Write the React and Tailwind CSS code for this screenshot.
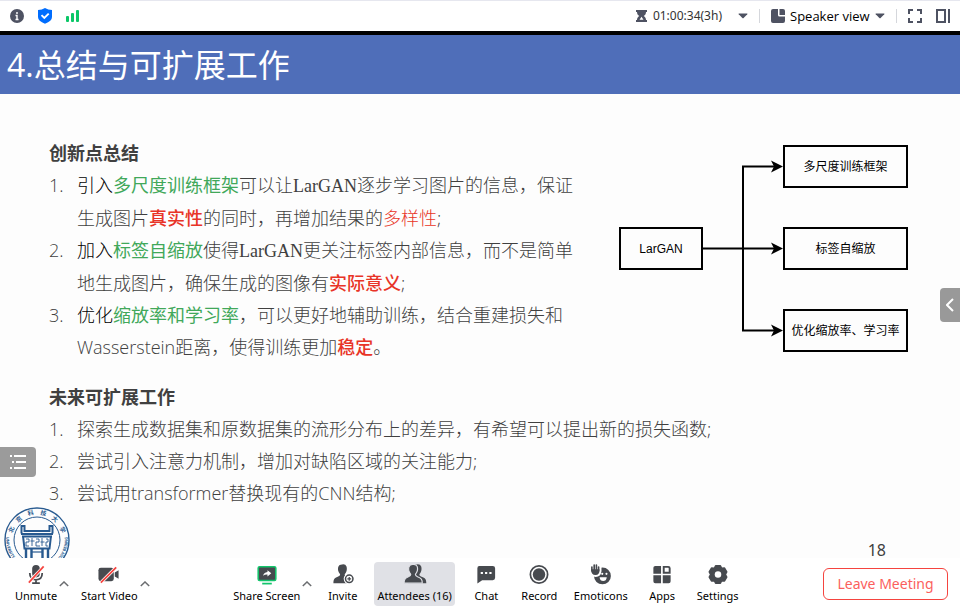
const DARK = "#474a4f";
const SLATE = "#4e5262";

const Green = ({ children }) => <span className="font-normal text-[#41a85a]">{children}</span>;
const Red = ({ children, bold }) => (
  <span className={bold ? "font-medium text-[#e83427]" : "font-light text-[#e83427]"}>{children}</span>
);
const Lead = ({ children }) => <span className="text-black">{children}</span>;
const Serif = ({ children }) => (
  <span className="font-['Liberation_Serif','Noto_Sans_CJK_SC',serif]">{children}</span>
);

function Numbered({ items }) {
  return (
    <ol className="flex flex-col">
      {items.map((item, i) => (
        <li key={i} className="flex">
          <span className="w-7 shrink-0">{i + 1}.</span>
          <span>{item}</span>
        </li>
      ))}
    </ol>
  );
}

const innovations = [
  <>
    <Lead>引入</Lead>
    <Green>多尺度训练框架</Green>可以让<Serif>LarGAN</Serif>逐步学习图片的信息，保证
    <br />
    生成图片<Red bold>真实性</Red>的同时，再增加结果的<Red>多样性</Red>;
  </>,
  <>
    <Lead>加入</Lead>
    <Green>标签自缩放</Green>使得<Serif>LarGAN</Serif>更关注标签内部信息，而不是简单
    <br />
    地生成图片，确保生成的图像有<Red bold>实际意义</Red>;
  </>,
  <>
    <Lead>优化</Lead>
    <Green>缩放率和学习率</Green>，可以更好地辅助训练，结合重建损失和
    <br />
    Wasserstein距离，使得训练更加<Red bold>稳定</Red>。
  </>,
];

const future = [
  "探索生成数据集和原数据集的流形分布上的差异，有希望可以提出新的损失函数;",
  "尝试引入注意力机制，增加对缺陷区域的关注能力;",
  "尝试用transformer替换现有的CNN结构;",
];

function Node({ children, width }) {
  return (
    <div
      className={`flex h-[43px] items-center justify-center border-2 border-black text-xs font-normal whitespace-nowrap text-black ${width}`}
    >
      {children}
    </div>
  );
}

function Diagram() {
  return (
    <div className="mt-2 flex shrink-0 items-center self-start font-['Liberation_Sans','Noto_Sans_CJK_SC',sans-serif]">
      <Node width="w-[84px]">LarGAN</Node>
      <svg width="80" height="207" viewBox="0 0 80 207" aria-hidden="true">
        <path d="M0 103.5H72M72 21.500H40V185.500H72" fill="none" stroke="#000" strokeWidth="2" />
        {[21.5, 103.5, 185.5].map((y) => (
          <path key={y} d="M0 0l-12-6 3 6-3 6z" transform={`translate(80 ${y})`} />
        ))}
      </svg>
      <div className="flex flex-col gap-[39px]">
        <Node width="w-[125px]">多尺度训练框架</Node>
        <Node width="w-[125px]">标签自缩放</Node>
        <Node width="w-[125px]">优化缩放率、学习率</Node>
      </div>
    </div>
  );
}

function Emblem() {
  return (
    <svg width="66" height="66" viewBox="0 0 66 66" fill="none" stroke="#285a90" role="img" aria-label="北京科技大学">
      <defs>
        <path id="arc-top" d="M7.500 33a25.500 25.500 0 0 1 51 0" />
        <path id="arc-bottom" d="M7 16A31 31 0 0 0 33 63.500 A31 31 0 0 0 59 16" />
      </defs>
      <circle cx="33" cy="33" r="32" strokeWidth="1.400" fill="#fdfdfd" />
      <circle cx="33" cy="33" r="23" strokeWidth="1" />
      <g fill="#285a90" stroke="none">
        <text fontSize="6" fontWeight="bold" fontFamily="Noto Sans CJK SC, sans-serif">
          <textPath href="#arc-top" startOffset="50%" textAnchor="middle">
            北　京　科　技　大　学
          </textPath>
        </text>
        <text fontSize="4" fontWeight="bold" fontFamily="Open Sans, sans-serif">
          <textPath href="#arc-bottom" startOffset="50%" textAnchor="middle">
            UNIVERSITY OF SCIENCE AND TECHNOLOGY BEIJING
          </textPath>
        </text>
      </g>
      <path
        d="M16.500 19h4v5h25v-5h4M17.500 18.500v8M48.500 18.500v8M17 27h32M18 29.500h30M19 29l1.500 12.500h25l1.500-12.500"
        strokeWidth="2"
      />
      <path d="M22 32h3v3h-3v4h3M28 31v8M26.500 34h4M32 32h3v3h-3v4h4M38 31v8M36.500 35h4M42 32h2v3h-2v4h2" strokeWidth="0.900" />
      <path d="M22 42v18M27.500 42v18M38.500 42v18M44 42v18" strokeWidth="2.400" />
      <path d="M28 45h10" strokeWidth="1.200" />
    </svg>
  );
}

const Caret = () => (
  <svg width="10" height="6" viewBox="0 0 10 6" aria-hidden="true">
    <path d="M1 .5h8q.8 0 .3.700L5.600 5q-.6.600-1.200 0L.7 1.200Q.2.500 1 .5z" fill={SLATE} />
  </svg>
);

function TopBar() {
  return (
    <header className="flex h-[31px] items-center border-t border-[#e6e7ef] bg-white pr-[10px] pl-[10px] text-[13px] font-['Open_Sans',sans-serif]">
      <button aria-label="Meeting information">
        <svg width="14" height="14" viewBox="0 0 14 14">
          <circle cx="7" cy="7" r="7" fill={SLATE} />
          <path d="M7 3v2M5.500 6.500H7v4M5.500 10.500h3" stroke="#fff" strokeWidth="1.400" fill="none" />
        </svg>
      </button>
      <button aria-label="Security" className="ml-[14px]">
        <svg width="14" height="16" viewBox="0 0 14 16">
          <path d="M7 0q3 2 7 2v7q0 4-7 6.800Q0 13 0 9V2q4 0 7-2z" fill="#006dfe" />
          <path d="M3.500 7.200L6.300 10l4.400-4.400" stroke="#fff" strokeWidth="1.900" fill="none" />
        </svg>
      </button>
      <button aria-label="Network" className="ml-[14px]">
        <svg width="14" height="14" viewBox="0 0 14 14" fill="#0bc768">
          <rect x="0" y="7" width="3" height="6" rx="1" />
          <rect x="5" y="4" width="3" height="9" rx="1" />
          <rect x="10" y="1" width="3" height="12" rx="1" />
        </svg>
      </button>
      <button className="ml-auto flex items-center text-xs text-[#333] font-['Noto_Sans',sans-serif]">
        <svg width="11" height="12" viewBox="0 0 11 12" className="mr-[6px]">
          <path d="M0 0h11v2H10c0 2-.8 3-2.300 4 1.500 1 2.300 2 2.300 4h1v2H0v-2h1c0-2 .8-3 2.300-4C1.800 5 1 4 1 2H0z" fill={SLATE} />
          <path d="M5.500 6.800L3.500 9.800h4z" fill="#fff" />
        </svg>
        <span className="mr-4">01:00:34(3h)</span>
        <Caret />
      </button>
      <span className="mx-[11px] h-[14px] w-px bg-[#d5d7dc]" />
      <svg width="14" height="14" viewBox="0 0 14 14" fill={SLATE} aria-hidden="true">
        <path d="M2 0h5v6q0 1.500 1.500 1.500H14V12q0 2-2 2H2q-2 0-2-2V2q0-2 2-2z" />
        <path d="M8.500 0H12q2 0 2 2v4H8.500z" />
      </svg>
      <label className="ml-[5px] flex items-center">
        <span className="sr-only">Layout</span>
        <select defaultValue="speaker" className="mr-[5px] h-6 appearance-none bg-transparent leading-6 text-black">
          <option value="speaker">Speaker view</option>
        </select>
        <Caret />
      </label>
      <span className="mx-[11px] h-[14px] w-px bg-[#d5d7dc]" />
      <button aria-label="Full screen">
        <svg width="14" height="14" viewBox="0 0 14 14" fill="none" stroke={SLATE} strokeWidth="2">
          <path d="M1 5V1h4M9 1h4v4M13 9v4H9M5 13H1V9" />
        </svg>
      </button>
      <button aria-label="Side panel" className="ml-[14px]">
        <svg width="14" height="14" viewBox="0 0 14 14" fill="none" stroke={SLATE} strokeWidth="2">
          <path d="M1 1h8v12H1zM13 0v14" />
        </svg>
      </button>
    </header>
  );
}

function Tool({ label, active, children }) {
  return (
    <button
      className={`flex h-11 min-w-[43px] flex-col items-center rounded px-[3px] pt-px whitespace-nowrap ${active ? "bg-[#e0e1e6]" : ""}`}
    >
      <svg width="24" height="24" viewBox="0 0 24 24" aria-hidden="true">
        {children}
      </svg>
      <span className="leading-5">{label}</span>
    </button>
  );
}

const More = ({ label }) => (
  <button aria-label={label} className="flex w-2 justify-center">
    <svg width="10" height="6" viewBox="0 0 10 6" fill="none" stroke="#6b6d70" strokeWidth="1.500" className="shrink-0">
      <path d="M.8 5L5 1l4.200 4" />
    </svg>
  </button>
);

const person =
  "M9 1.500Q12.500.8 13.800 3.800c.7 3-.2 6-2 8 0 1.500.7 2 2.200 2.600 4 1.500 5 2.600 5 6.600H0c0-4 1-5.100 4.500-6.600 1.500-.6 2.500-1.100 2.500-2.600C5 9.500 4.300 7 5 4.300 5.700 2.200 7 1.500 9 1.500z";

function Toolbar() {
  return (
    <footer className="flex h-[52px] items-center justify-between bg-white pr-3 pb-px pl-3 text-[11px] text-black font-['Noto_Sans',sans-serif]">
      <div className="flex items-center gap-[10px]">
        <div className="flex items-center">
          <Tool label="Unmute">
            <rect x="8" y="2" width="8" height="13" rx="4" fill={DARK} />
            <path d="M5.500 10.500q0 7 6.500 7t6.500-7M12 17v3.500M8 21h8" fill="none" stroke={DARK} strokeWidth="1.800" />
            <path d="M4.500 20L20 4" stroke="#fff" strokeWidth="3.500" />
            <path d="M4.500 20.500L20 3.500" stroke="#f5443f" strokeWidth="1.800" />
          </Tool>
          <More label="Audio options" />
        </div>
        <div className="flex items-center">
          <Tool label="Start Video">
            <rect x="1" y="5" width="16" height="14" rx="2.500" fill={DARK} />
            <path d="M18 10l4-2.500v9L18 14z" fill={DARK} />
            <path d="M3.500 20.500L19.500 4.500" stroke="#fff" strokeWidth="3.500" />
            <path d="M3.500 20.500L19.500 4.500" stroke="#f5443f" strokeWidth="1.800" />
          </Tool>
          <More label="Video options" />
        </div>
      </div>

      <div className="flex items-center gap-[10px]">
        <div className="flex items-center">
          <Tool label="Share Screen">
            <rect x="2.800" y="3.800" width="18.400" height="14.400" rx="1.500" fill={DARK} stroke="#13c46b" strokeWidth="1.600" />
            <path d="M12.500 7.500l4 3.300-4 3.200v-2q-2.800-.2-4.500 1.300.5-3.500 4.500-4z" fill="#fff" />
            <path d="M7 21.500h10" stroke="#13c46b" strokeWidth="1.800" />
          </Tool>
          <More label="Share options" />
        </div>
        <Tool label="Invite">
          <path d={person} transform="translate(2 0)" fill={DARK} />
          <circle cx="18.500" cy="16.500" r="5.800" fill="#fff" />
          <circle cx="18.500" cy="16.500" r="3.900" fill="none" stroke={DARK} strokeWidth="1.600" />
          <path d="M18.500 14.500v4M16.500 16.500h4" stroke={DARK} strokeWidth="1.300" />
        </Tool>
        <Tool label="Attendees (16)" active>
          <path d={person} transform="translate(4.800 0)" fill={DARK} />
          <path d={person} transform="translate(.6 0)" fill={DARK} stroke="#e0e1e6" strokeWidth="1.200" />
        </Tool>
        <Tool label="Chat">
          <path d="M5 3h14q2.500 0 2.500 2.500v10Q21.500 18 19 18H8l-5 3.500V5.500Q3 3 5 3z" fill={DARK} />
          <path d="M6.500 10.500h2.300M11 10.500h2.300M15.500 10.500h2.300" stroke="#fff" strokeWidth="2" />
        </Tool>
        <Tool label="Record">
          <circle cx="12" cy="12" r="9" fill="none" stroke={DARK} strokeWidth="1.800" />
          <circle cx="12" cy="12" r="6.500" fill={DARK} />
        </Tool>
        <Tool label="Emoticons">
          <circle cx="13.500" cy="13.500" r="8.800" fill={DARK} />
          <path d="M2 4v4.500Q2.500 13 6.500 13T11 8.500V4" fill="#fff" stroke="#fff" strokeWidth="3" />
          <path d="M2.500 8V4.200M4.900 8V2.200M7.200 8V2.200M9.500 8V4.200" stroke={DARK} strokeWidth="1.700" strokeLinecap="round" />
          <path d="M1.700 6.500h8.700q.5 6-4.200 6t-4.500-6z" fill={DARK} />
          <circle cx="13.300" cy="11.300" r="1.100" fill="#fff" />
          <circle cx="17.700" cy="11.300" r="1.100" fill="#fff" />
          <path d="M10.500 14.800H18q-.5 4-3.700 4t-3.800-4z" fill="#fff" />
        </Tool>
        <Tool label="Apps">
          <path d="M5 3h6v8.200H3V5q0-2 2-2zM3 12.800h8V21H5q-2 0-2-2zM12.800 12.800H21V19q0 2-2 2h-6.200z" fill={DARK} />
          <path d="M13.800 4h4.700q1.500 0 1.500 1.500v4.700h-6.200z" fill="none" stroke={DARK} strokeWidth="2" />
        </Tool>
        <Tool label="Settings">
          <path
            d="M9.500 3h5l1.300 2.500 3-.2 2.300 3.900L19.700 12l1.400 2.800-2.300 3.900-3-.2-1.300 2.500h-5l-1.300-2.500-3 .2-2.300-3.900L4.300 12 2.900 9.200l2.300-3.900 3 .2z"
            fill={DARK}
            stroke={DARK}
            strokeWidth="1.600"
            strokeLinejoin="round"
          />
          <circle cx="12" cy="12" r="3.400" fill="#fff" />
        </Tool>
      </div>

      <button className="h-8 w-[125px] rounded-md border border-[#f5443f] text-sm whitespace-nowrap text-[#fb5f5d]">
        Leave Meeting
      </button>
    </footer>
  );
}

export default function App() {
  return (
    <div className="flex min-h-screen flex-col bg-white">
      <TopBar />
      <main className="relative flex-1 overflow-hidden border-t-4 border-black bg-[#fdfdfd] text-lg leading-8 font-light text-[#404040] font-['Open_Sans','Noto_Sans_CJK_SC',sans-serif]">
        <h1 className="h-[59px] bg-[#4f6eb9] pl-[7px] text-[32px] leading-[59px] font-normal whitespace-nowrap text-white">
          4.总结与可扩展工作
        </h1>
        <div className="pt-[43px] pr-[52px] pl-[49px]">
          <div className="flex justify-between">
            <section className="whitespace-nowrap">
              <h2 className="font-bold">创新点总结</h2>
              <Numbered items={innovations} />
            </section>
            <Diagram />
          </div>
          <section className="mt-[18px] whitespace-nowrap">
            <h2 className="font-bold">未来可扩展工作</h2>
            <Numbered items={future} />
          </section>
        </div>
        <div className="absolute -bottom-[15px] left-1">
          <Emblem />
        </div>
        <span className="absolute right-[74px] -bottom-1 text-base leading-6 font-normal font-['Noto_Sans',sans-serif]">
          18
        </span>
        <button
          aria-label="Show list"
          className="absolute bottom-[81px] left-0 flex h-[30px] w-9 items-center justify-center rounded-r bg-[#9b9b9b]"
        >
          <svg width="16" height="14" viewBox="0 0 16 14" stroke="#fff" strokeWidth="2">
            <path d="M0 1h2M4 1h12M2 7h2M6 7h10M0 13h2M4 13h12" />
          </svg>
        </button>
        <button
          aria-label="Open panel"
          className="absolute right-0 bottom-[236px] flex h-[34px] w-5 items-center justify-center rounded-l bg-[#999]"
        >
          <svg width="8" height="14" viewBox="0 0 8 14" fill="none" stroke="#fff" strokeWidth="2">
            <path d="M7 1L1 7l6 6" />
          </svg>
        </button>
      </main>
      <Toolbar />
    </div>
  );
}
